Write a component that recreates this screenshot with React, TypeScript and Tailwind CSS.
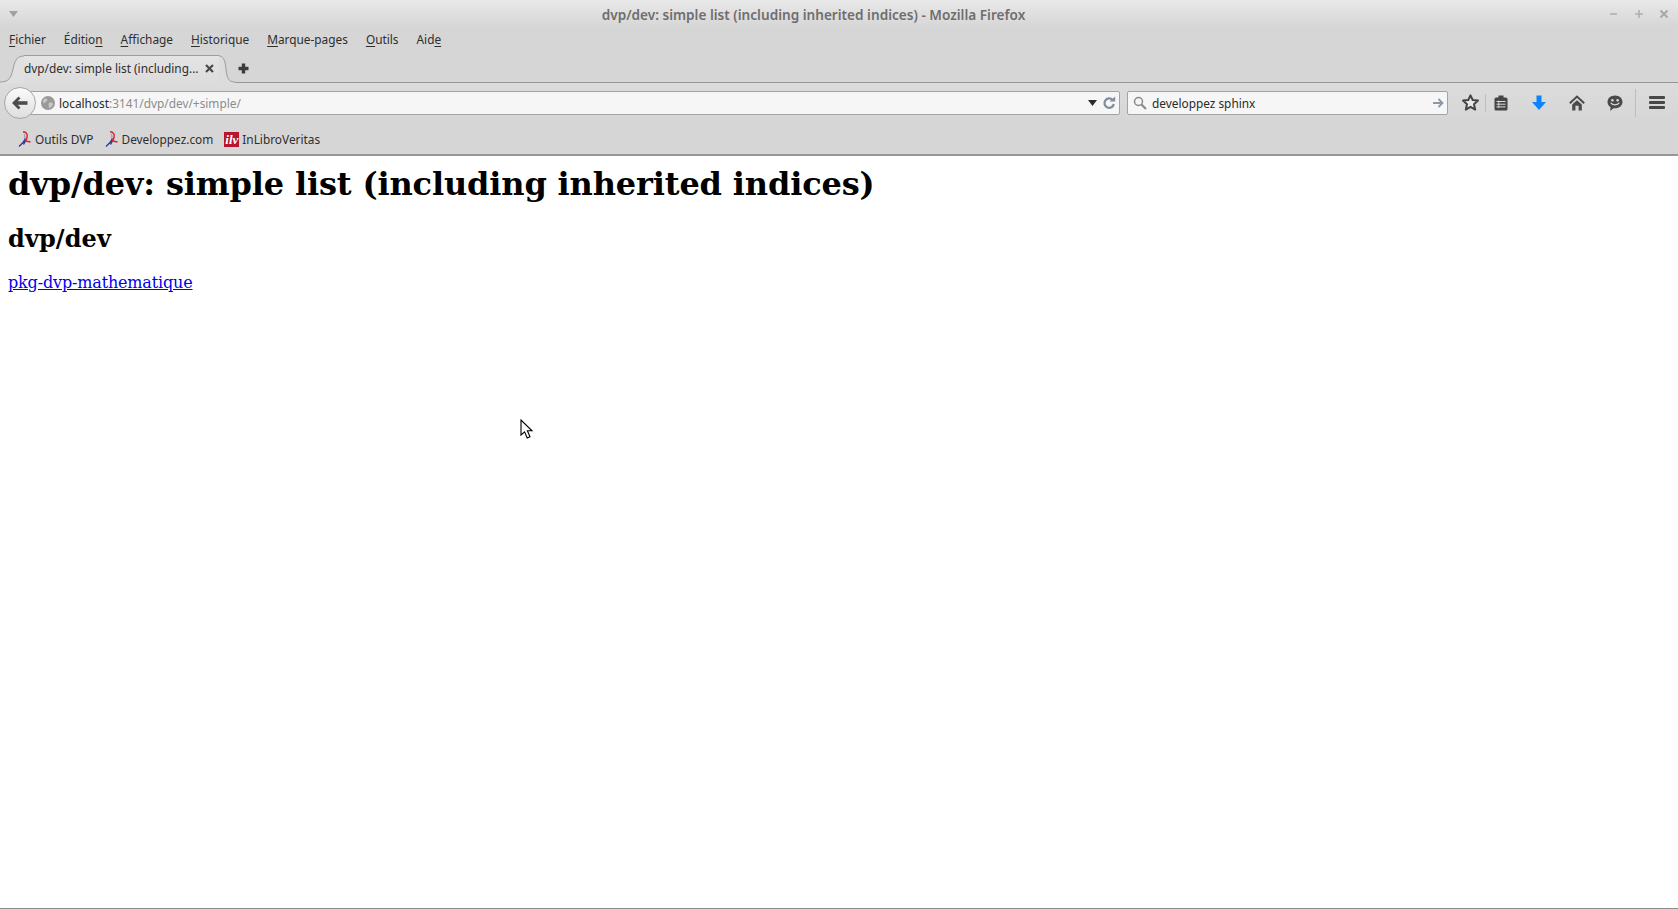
import { ReactNode } from 'react';

const uiFont = "font-['Noto_Sans','Open_Sans',sans-serif]";

function MenuItem({ before = '', mark, after }: { before?: string; mark: string; after: string }) {
  return (
    <span className="text-[11.85px] leading-[18px] text-[#2e2e2e]">
      {before}
      <span className="underline underline-offset-2">{mark}</span>
      {after}
    </span>
  );
}

function DvpLogo() {
  return (
    <svg width="14" height="16" viewBox="0 0 14 16" className="shrink-0">
      <path d="M7.5 7.5 C6.5 10 4 13 1 15.5 M7.5 10 L5.5 13.5" fill="none" stroke="#27338f" strokeWidth="1.3" />
      <path d="M5 0.8 C8.5 1 10 3.5 9 6.5 C8.6 8 8 9 7.5 10 L12.5 11" fill="none" stroke="#dc2430" strokeWidth="1.5" />
      <path d="M6 3 C7 4 7.3 5.5 6.5 7.5" fill="none" stroke="#8a8fb0" strokeWidth="1" />
    </svg>
  );
}

function IlvLogo() {
  return (
    <div className="flex h-[15px] w-[15px] shrink-0 items-center justify-center bg-[#b8152f] font-['Liberation_Serif',serif] text-[13px] font-bold italic leading-none text-white">
      ilv
    </div>
  );
}

function Bookmark({ icon, label }: { icon: ReactNode; label: string }) {
  return (
    <div className="flex items-center gap-[3px]">
      {icon}
      <span className="text-[11.85px] leading-[18px] text-[#2e2e2e]">{label}</span>
    </div>
  );
}

function TopBar() {
  return (
    <div className={`${uiFont} h-[156px] shrink-0 border-b-2 border-[#979797] bg-[#d6d6d6]`}>
      {/* title bar */}
      <div className="flex h-[27px] items-center bg-gradient-to-b from-[#e9e9e9] to-[#d6d6d6] pl-[9px] pr-[9px]">
        <svg width="9" height="6" viewBox="0 0 9 6" className="shrink-0">
          <path d="M0 0H9L4.5 6Z" fill="#a0a0a0" />
        </svg>
        <div className="flex-1 pt-[2px] text-center text-[13.6px] font-semibold leading-[18px] text-[#6e6e6e]">
          dvp/dev: simple list (including inherited indices) - Mozilla Firefox
        </div>
        <div className="flex items-center gap-[15px]">
          <svg width="10" height="10" viewBox="0 0 10 10"><path d="M1 5H8" stroke="#b0b0b0" strokeWidth="1.6" /></svg>
          <svg width="10" height="10" viewBox="0 0 10 10"><path d="M1 5H9M5 1V9" stroke="#b0b0b0" strokeWidth="1.6" /></svg>
          <svg width="10" height="10" viewBox="0 0 10 10"><path d="M1.5 1.5L8.5 8.5M8.5 1.5L1.5 8.5" stroke="#a8a8a8" strokeWidth="2" /></svg>
        </div>
      </div>

      {/* menu */}
      <div className="flex h-[25px] items-center gap-[18px] pb-[1px] pl-[9px]">
        <MenuItem mark="F" after="ichier" />
        <MenuItem before="Éditio" mark="n" after="" />
        <MenuItem mark="A" after="ffichage" />
        <MenuItem mark="H" after="istorique" />
        <MenuItem mark="M" after="arque-pages" />
        <MenuItem mark="O" after="utils" />
        <MenuItem before="Aid" mark="e" after="" />
      </div>

      {/* tab strip */}
      <div className="flex h-[31px] items-end border-b border-[#979797]">
        <div className="-mb-px flex h-[28px] items-stretch">
          <svg width="24" height="28" viewBox="0 0 24 28" className="shrink-0">
            <path d="M0 27 C8 27 11 24 13 14 C15 4 18 1 24 1 L24 28 L0 28Z" fill="#e0e0e0" />
            <path d="M0 27 C8 27 11 24 13 14 C15 4 18 1 24 1" fill="none" stroke="#9c9c9c" />
          </svg>
          <div className="flex w-[195px] items-center justify-between border-t border-[#9c9c9c] bg-gradient-to-b from-[#e4e4e4] to-[#dcdcdc] pb-[3px] pr-[5px]">
            <span className="whitespace-nowrap text-[11.85px] leading-[18px] text-[#2e2e2e]">dvp/dev: simple list (including...</span>
            <svg width="9" height="9" viewBox="0 0 9 9" className="shrink-0">
              <path d="M1 1L8 8M8 1L1 8" stroke="#4a4a4a" strokeWidth="2.2" />
            </svg>
          </div>
          <svg width="16" height="28" viewBox="0 0 16 28" className="shrink-0">
            <path d="M16 27 C10 27 8 24 7 14 C6 4 4 1 0 1 L0 28 L16 28Z" fill="#dcdcdc" />
            <path d="M16 27 C10 27 8 24 7 14 C6 4 4 1 0 1" fill="none" stroke="#9c9c9c" />
          </svg>
        </div>
        <svg width="11" height="11" viewBox="0 0 11 11" className="mb-[8px] ml-[3px] shrink-0">
          <path d="M5.5 0.5V10.5M0.5 5.5H10.5" stroke="#3c3c3c" strokeWidth="3.4" />
        </svg>
      </div>

      {/* nav toolbar */}
      <div className="relative flex h-[39px] items-center bg-gradient-to-b from-[#dcdcdc] to-[#d6d6d6] pl-[19px] pr-[13px]">
        <div className="absolute left-[4px] top-[4px] z-10 flex h-[32px] w-[32px] items-center justify-center rounded-full border border-[#a6a6a6] bg-gradient-to-b from-[#fbfbfb] to-[#dedede]">
          <svg width="16" height="14" viewBox="0 0 16 14">
            <path d="M7.5 1.5L2 7L7.5 12.5" fill="none" stroke="#4c4c4c" strokeWidth="2.8" />
            <path d="M3 7H15.5" stroke="#4c4c4c" strokeWidth="3.6" />
          </svg>
        </div>
        <div className="flex h-[24px] flex-1 items-center rounded-r-[2px] border border-[#a3a3a3] bg-[#f6f6f6] pl-[21px] pr-[3px]">
          <svg width="14" height="14" viewBox="0 0 14 14" className="shrink-0">
            <circle cx="7" cy="7" r="7" fill="#9a9a9a" />
            <path d="M3 3 C5 2 7 3 6 5 C5 6 3 6 3.5 8 C2 7 1.5 5 3 3Z M8 7 C10 6 12 7 12 8 C11 11 9 12 8 12 C8 10 7 9 8 7Z" fill="#c9c9c9" />
          </svg>
          <div className="ml-[4px] flex-1 pt-[1px] text-[11.85px] leading-[18px] text-[#8c8c8c]">
            <span className="text-[#2a2a2a]">localhost</span>:3141/dvp/dev/+simple/
          </div>
          <svg width="9" height="6" viewBox="0 0 9 6" className="mr-[5px] shrink-0">
            <path d="M0 0H9L4.5 6Z" fill="#2c2c2c" />
          </svg>
          <svg width="14" height="14" viewBox="0 0 14 14" className="shrink-0">
            <path d="M10.5 3.8A4.7 4.7 0 1 0 11.8 8" fill="none" stroke="#7f8e9c" strokeWidth="2.3" />
            <path d="M7.5 5.5H13.2V0.5Z" fill="#7f8e9c" />
          </svg>
        </div>
        <div className="ml-[7px] flex h-[24px] w-[321px] shrink-0 items-center rounded-[2px] border border-[#a3a3a3] bg-[#f6f6f6] pl-[5px] pr-[3px]">
          <svg width="14" height="14" viewBox="0 0 14 14" className="shrink-0">
            <circle cx="5.5" cy="5.5" r="4" fill="none" stroke="#8a8a8a" strokeWidth="1.5" />
            <path d="M8.5 8.5L13 13" stroke="#8a8a8a" strokeWidth="2.2" />
          </svg>
          <span className="ml-[5px] flex-1 pt-[1px] text-[11.85px] leading-[18px] text-[#2a2a2a]">developpez sphinx</span>
          <svg width="12" height="12" viewBox="0 0 12 12" className="shrink-0">
            <path d="M1 6H10M6.5 2L10.5 6L6.5 10" fill="none" stroke="#8d9aa6" strokeWidth="1.8" />
          </svg>
        </div>

        <svg width="17" height="17" viewBox="0 0 17 17" className="ml-[14px] shrink-0">
          <path d="M8.5 1.3L10.7 6L16 6.6L12 10.2L13.2 15.6L8.5 12.8L3.8 15.6L5 10.2L1 6.6L6.3 6Z" fill="#e8e8e8" stroke="#444" strokeWidth="2" strokeLinejoin="round" />
        </svg>
        <div className="ml-[6px] h-[18px] w-px shrink-0 bg-[#bdbdbd]" />
        <svg width="14" height="16" viewBox="0 0 14 16" className="ml-[8px] shrink-0">
          <rect x="0.5" y="2.5" width="13" height="13" rx="1.5" fill="#454545" />
          <rect x="4.5" y="0.5" width="5" height="3" fill="#454545" />
          <path d="M2.5 6.5H11.5M2.5 9.2H11.5M2.5 11.9H11.5" stroke="#dcdcdc" strokeWidth="1" />
          <path d="M4.8 5.5V13" stroke="#dcdcdc" strokeWidth="0.8" />
        </svg>
        <svg width="14" height="16" viewBox="0 0 14 16" className="ml-[24px] shrink-0">
          <path d="M4.5 0.5H9.5V7H14L7 15L0 7H4.5Z" fill="#0a84ff" />
        </svg>
        <svg width="16" height="16" viewBox="0 0 16 16" className="ml-[23px] shrink-0">
          <path d="M0.8 8.2L8 1.5L15.2 8.2" fill="none" stroke="#4a4a4a" strokeWidth="2" />
          <path d="M8 5.2L12.8 9.6V15.5H9.6V10.8H6.4V15.5H3.2V9.6Z" fill="#4a4a4a" />
        </svg>
        <svg width="16" height="17" viewBox="0 0 16 17" className="ml-[22px] mt-[2px] shrink-0">
          <path d="M8 0.5C12.3 0.5 15.5 3.3 15.5 7C15.5 10.7 12.3 13.3 8 13.3C7.5 13.3 7 13.3 6.5 13.2L3.2 16L3.6 12.2C1.7 11.1 0.5 9.2 0.5 7C0.5 3.3 3.7 0.5 8 0.5Z" fill="#4a4a4a" />
          <circle cx="5.4" cy="5.2" r="1.2" fill="#dcdcdc" />
          <circle cx="10.6" cy="5.2" r="1.2" fill="#dcdcdc" />
          <path d="M3.8 7.8C5.2 10.6 10.8 10.6 12.2 7.8" fill="none" stroke="#dcdcdc" strokeWidth="1.3" />
        </svg>
        <div className="ml-[12px] h-[28px] w-px shrink-0 bg-[#bdbdbd]" />
        <div className="ml-[13px] flex h-[13px] w-[16px] shrink-0 flex-col justify-between">
          <div className="h-[3px] rounded-[1px] bg-[#484848]" />
          <div className="h-[3px] rounded-[1px] bg-[#484848]" />
          <div className="h-[3px] rounded-[1px] bg-[#484848]" />
        </div>
      </div>

      {/* bookmarks */}
      <div className="flex h-[32px] items-center gap-[11px] pl-[18px] pt-[2px]">
        <Bookmark icon={<DvpLogo />} label="Outils DVP" />
        <Bookmark icon={<DvpLogo />} label="Developpez.com" />
        <Bookmark icon={<IlvLogo />} label="InLibroVeritas" />
      </div>
    </div>
  );
}

export default function App() {
  return (
    <div className="relative flex h-[909px] w-[1678px] flex-col overflow-hidden bg-white">
      <TopBar />
      <main className="flex-1 border-b border-[#8e8e8e] px-2 font-['DejaVu_Serif',serif] text-black">
        <h1 className="mt-[10px] text-[32px] font-bold leading-[37px] tracking-[-0.15px]">dvp/dev: simple list (including inherited indices)</h1>
        <h2 className="mt-[22px] text-[24px] font-bold leading-[28px] tracking-[0.1px]">dvp/dev</h2>
        <p className="mt-[20px] text-[16px] leading-[19px] tracking-[-0.16px]">
          <a href="#" className="text-[#0000ee] underline">pkg-dvp-mathematique</a>
        </p>
      </main>
      {/* mouse pointer */}
      <svg width="14" height="22" viewBox="0 0 14 22" className="absolute left-[520px] top-[419px]">
        <path d="M1 1V16L4.6 12.8L7.2 19L10 17.8L7.4 11.8H12Z" fill="#fff" stroke="#000" strokeWidth="1.1" />
      </svg>
    </div>
  );
}
